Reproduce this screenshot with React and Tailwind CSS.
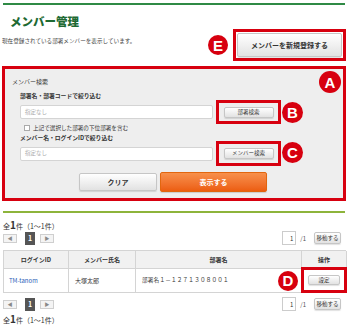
import React from "react";

const Badge = ({ letter, size = "h-[21px] w-[21px]" }) => (
  <span
    className={`flex ${size} shrink-0 items-center justify-center rounded-full bg-[#d7000f] font-['Liberation_Sans',sans-serif] text-[15px] font-bold leading-none text-white`}
  >
    {letter}
  </span>
);

const GrayButton = ({ className, children }) => (
  <button
    className={`flex items-center justify-center rounded-[2px] border border-[#c6c6c6] bg-linear-to-b from-white to-[#e2e2e2] text-[#333] shadow-[0_1px_1px_rgba(0,0,0,0.12)] ${className}`}
  >
    {children}
  </button>
);

const Pager = ({ className }) => (
  <div className={`flex h-[14px] items-center justify-between px-[3px] ${className}`}>
    <div className="flex items-center">
      <span className="flex h-[9px] w-[14px] items-center justify-center border border-[#cfcfcf] bg-[#f4f4f4] text-[5px] text-[#888]">
        ◀
      </span>
      <span className="ml-[8px] flex h-[13px] w-[10px] items-center justify-center bg-[#555] text-[7px] font-bold text-white">
        1
      </span>
      <span className="ml-[5px] flex h-[9px] w-[14px] items-center justify-center border border-[#cfcfcf] bg-[#f4f4f4] text-[5px] text-[#888]">
        ▶
      </span>
    </div>
    <div className="mr-[4px] flex items-center">
      <span className="flex h-[14px] w-[14px] items-center justify-end border border-[#ccc] bg-white pr-[2px] text-[6px] text-[#333]">
        1
      </span>
      <span className="ml-[4px] text-[6px] text-[#555]">/1</span>
      <GrayButton className="ml-[8px] h-[12px] w-[27px] text-[5.5px]">移動する</GrayButton>
    </div>
  </div>
);

const Total = ({ className }) => (
  <div className={`flex h-[10px] items-baseline pl-[3px] leading-[10px] text-[#333] ${className}`}>
    <span className="text-[7px]">全</span>
    <span className="text-[10px] font-bold">1</span>
    <span className="text-[7px]">件（1～1件）</span>
  </div>
);

export default function App() {
  return (
    <div className="relative h-[327px] w-[348px] overflow-hidden bg-white pt-[3px] font-['Noto_Sans_CJK_JP','Liberation_Sans',sans-serif] text-[#333]">
      <div className="mx-[3px] h-[2px] bg-[#2f8a45]" />

      <h1 className="mt-[9px] h-[14px] pl-[10px] text-[11.5px] font-black leading-[14px] text-[#1e6a33]">
        メンバー管理
      </h1>

      <div className="mt-[1px] flex items-start justify-between px-[2px]">
        <p className="mt-[9px] text-[5.6px] leading-[6px] text-[#444]">
          現在登録されている部署メンバーを表示しています。
        </p>
        <div className="flex items-center gap-[5px]">
          <Badge letter="E" size="h-[20px] w-[20px]" />
          <div className="flex h-[32px] w-[113px] border-[3px] border-[#d7000f] p-[1px]">
            <GrayButton className="h-full w-full text-[7px] font-bold">
              メンバーを新規登録する
            </GrayButton>
          </div>
        </div>
      </div>

      <section className="mx-[2px] mt-[5px] border-[3px] border-[#d7000f] bg-[#eeeeee] pb-[6px]">
        <div className="mt-[2px] flex h-[22px] items-center justify-between pl-[7px] pr-[2px]">
          <span className="text-[6px] leading-[6px]">メンバー検索</span>
          <Badge letter="A" size="h-[22px] w-[22px]" />
        </div>

        <p className="h-[6px] pl-[15px] text-[5.8px] font-bold leading-[6px]">
          部署名・部署コードで絞り込む
        </p>
        <div className="mt-[1px] flex h-[24px] items-center pl-[15px]">
          <div className="flex h-[14px] w-[193px] items-center rounded-[2px] border border-[#d4d4d4] bg-white pl-[4px] text-[5.5px] text-[#aaa]">
            指定なし
          </div>
          <div className="ml-[3px] flex h-[24px] w-[65px] items-center justify-center border-[3px] border-[#d7000f]">
            <GrayButton className="h-[11px] w-[50px] text-[5.5px]">部署検索</GrayButton>
          </div>
          <span className="ml-[1px]">
            <Badge letter="B" />
          </span>
        </div>

        <label className="mt-[1px] flex h-[6px] items-center pl-[19px] text-[5.6px] leading-[6px]">
          <span className="h-[6px] w-[6px] border border-[#aaa] bg-white" />
          <span className="ml-[3px]">上記で選択した部署の下位部署を含む</span>
        </label>

        <p className="mt-[4px] h-[6px] pl-[15px] text-[5.8px] font-bold leading-[6px]">
          メンバー名・ログインIDで絞り込む
        </p>
        <div className="flex h-[25px] items-center pl-[15px]">
          <div className="flex h-[14px] w-[193px] items-center rounded-[2px] border border-[#d4d4d4] bg-white pl-[4px] text-[5.5px] text-[#aaa]">
            指定なし
          </div>
          <div className="ml-[3px] flex h-[25px] w-[65px] items-center justify-center border-[3px] border-[#d7000f]">
            <GrayButton className="h-[11px] w-[50px] text-[5.5px]">メンバー検索</GrayButton>
          </div>
          <span className="ml-[1px] -mt-[3px]">
            <Badge letter="C" />
          </span>
        </div>

        <div className="mt-[6px] flex h-[20px] items-center gap-[3px] pl-[74px]">
          <GrayButton className="h-[18px] w-[78px] text-[7px] font-bold">クリア</GrayButton>
          <button className="flex h-[20px] w-[107px] items-center justify-center rounded-[2px] border border-[#e2660f] bg-linear-to-b from-[#f7904a] to-[#ec5d0e] text-[7px] font-bold text-white shadow-[0_1px_1px_rgba(0,0,0,0.15)]">
            表示する
          </button>
        </div>
      </section>

      <div className="mx-[3px] mt-[10px] h-[2px] bg-[#8db43b]" />

      <Total className="mt-[7px]" />
      <Pager className="mt-[1px]" />

      <div className="ml-[3px] mt-[5px] w-[343px] border-l border-t border-[#d4d4d4] text-[6px]">
        <div className="grid h-[18px] grid-cols-[65px_67px_166px_45px] bg-[#f1f1f1] font-bold">
          <div className="flex items-center justify-center border-b border-r border-[#d4d4d4]">ログインID</div>
          <div className="flex items-center justify-center border-b border-r border-[#d4d4d4]">メンバー氏名</div>
          <div className="flex items-center justify-center border-b border-r border-[#d4d4d4]">部署名</div>
          <div className="flex items-center justify-center border-b border-r border-[#d4d4d4]">操作</div>
        </div>
        <div className="grid h-[24px] grid-cols-[65px_67px_166px_45px]">
          <div className="flex items-center border-b border-r border-[#d4d4d4] pl-[5px] text-[#2a62b8]">TM-tanom</div>
          <div className="flex items-center border-b border-r border-[#d4d4d4] pl-[6px]">大塚太郎</div>
          <div className="flex items-center justify-between border-b border-r border-[#d4d4d4] pl-[6px] pr-[3px]">
            <span className="text-[5.6px] tracking-[0.2px]">部署名１－１２７１３０８００１</span>
            <Badge letter="D" size="h-[20px] w-[20px]" />
          </div>
          <div className="-ml-[1px] -mt-[2px] flex h-[26px] items-center justify-center border-[3px] border-[#d7000f] bg-white">
            <GrayButton className="h-[10px] w-[32px] text-[5.5px]">設定</GrayButton>
          </div>
        </div>
      </div>

      <Pager className="mt-[4px]" />
      <Total className="mt-[3px]" />
    </div>
  );
}
